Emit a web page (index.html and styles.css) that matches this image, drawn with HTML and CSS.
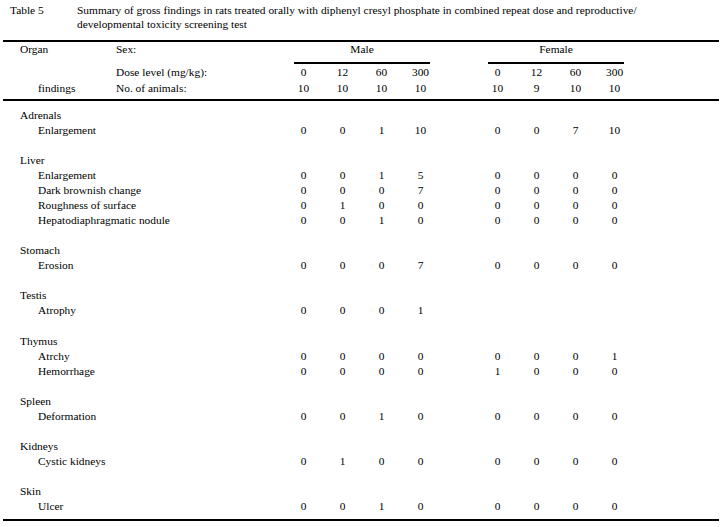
FILE: index.html
```html
<!DOCTYPE html>
<html>
<head>
<meta charset="utf-8">
<title>Table 5</title>
<link rel="stylesheet" href="styles.css">
</head>
<body>
<div class="page">
  <div class="caption">
    <div class="cap-label">Table 5</div>
    <div class="cap-text">Summary of gross findings in rats treated orally with diphenyl cresyl phosphate in combined repeat dose and reproductive/<br>developmental toxicity screening test</div>
  </div>
  <table class="tbl">
    <colgroup>
      <col class="c-organ"><col class="c-sex">
      <col class="c-num"><col class="c-num"><col class="c-num"><col class="c-num">
      <col class="c-gap">
      <col class="c-num"><col class="c-num"><col class="c-num"><col class="c-num">
      <col class="c-tail">
    </colgroup>
    <thead>
      <tr class="h1">
        <td class="organ-h">Organ</td>
        <td class="sex-h">Sex:</td>
        <td colspan="4"><div class="group">Male</div></td>
        <td></td>
        <td colspan="4"><div class="group">Female</div></td>
        <td></td>
      </tr>
      <tr class="h2">
        <td></td>
        <td class="sex-h">Dose level (mg/kg):</td>
        <td class="n">0</td><td class="n">12</td><td class="n">60</td><td class="n">300</td>
        <td></td>
        <td class="n">0</td><td class="n">12</td><td class="n">60</td><td class="n">300</td>
        <td></td>
      </tr>
      <tr class="h3">
        <td class="find-h">findings</td>
        <td class="sex-h">No. of animals:</td>
        <td class="n">10</td><td class="n">10</td><td class="n">10</td><td class="n">10</td>
        <td></td>
        <td class="n">10</td><td class="n">9</td><td class="n">10</td><td class="n">10</td>
        <td></td>
      </tr>
    </thead>
    <tbody>
      <tr class="first"><td colspan="12" class="organ">Adrenals</td></tr>
      <tr><td colspan="2" class="find">Enlargement</td><td class="n">0</td><td class="n">0</td><td class="n">1</td><td class="n">10</td><td></td><td class="n">0</td><td class="n">0</td><td class="n">7</td><td class="n">10</td><td></td></tr>
      <tr class="blank"><td colspan="12"></td></tr>

      <tr><td colspan="12" class="organ">Liver</td></tr>
      <tr><td colspan="2" class="find">Enlargement</td><td class="n">0</td><td class="n">0</td><td class="n">1</td><td class="n">5</td><td></td><td class="n">0</td><td class="n">0</td><td class="n">0</td><td class="n">0</td><td></td></tr>
      <tr><td colspan="2" class="find">Dark brownish change</td><td class="n">0</td><td class="n">0</td><td class="n">0</td><td class="n">7</td><td></td><td class="n">0</td><td class="n">0</td><td class="n">0</td><td class="n">0</td><td></td></tr>
      <tr><td colspan="2" class="find">Roughness of surface</td><td class="n">0</td><td class="n">1</td><td class="n">0</td><td class="n">0</td><td></td><td class="n">0</td><td class="n">0</td><td class="n">0</td><td class="n">0</td><td></td></tr>
      <tr><td colspan="2" class="find">Hepatodiaphragmatic nodule</td><td class="n">0</td><td class="n">0</td><td class="n">1</td><td class="n">0</td><td></td><td class="n">0</td><td class="n">0</td><td class="n">0</td><td class="n">0</td><td></td></tr>
      <tr class="blank"><td colspan="12"></td></tr>

      <tr><td colspan="12" class="organ">Stomach</td></tr>
      <tr><td colspan="2" class="find">Erosion</td><td class="n">0</td><td class="n">0</td><td class="n">0</td><td class="n">7</td><td></td><td class="n">0</td><td class="n">0</td><td class="n">0</td><td class="n">0</td><td></td></tr>
      <tr class="blank"><td colspan="12"></td></tr>

      <tr><td colspan="12" class="organ">Testis</td></tr>
      <tr><td colspan="2" class="find">Atrophy</td><td class="n">0</td><td class="n">0</td><td class="n">0</td><td class="n">1</td><td></td><td></td><td></td><td></td><td></td><td></td></tr>
      <tr class="blank tall"><td colspan="12"></td></tr>

      <tr><td colspan="12" class="organ">Thymus</td></tr>
      <tr><td colspan="2" class="find">Atrchy</td><td class="n">0</td><td class="n">0</td><td class="n">0</td><td class="n">0</td><td></td><td class="n">0</td><td class="n">0</td><td class="n">0</td><td class="n">1</td><td></td></tr>
      <tr><td colspan="2" class="find">Hemorrhage</td><td class="n">0</td><td class="n">0</td><td class="n">0</td><td class="n">0</td><td></td><td class="n">1</td><td class="n">0</td><td class="n">0</td><td class="n">0</td><td></td></tr>
      <tr class="blank"><td colspan="12"></td></tr>

      <tr><td colspan="12" class="organ">Spleen</td></tr>
      <tr><td colspan="2" class="find">Deformation</td><td class="n">0</td><td class="n">0</td><td class="n">1</td><td class="n">0</td><td></td><td class="n">0</td><td class="n">0</td><td class="n">0</td><td class="n">0</td><td></td></tr>
      <tr class="blank"><td colspan="12"></td></tr>

      <tr><td colspan="12" class="organ">Kidneys</td></tr>
      <tr><td colspan="2" class="find">Cystic kidneys</td><td class="n">0</td><td class="n">1</td><td class="n">0</td><td class="n">0</td><td></td><td class="n">0</td><td class="n">0</td><td class="n">0</td><td class="n">0</td><td></td></tr>
      <tr class="blank"><td colspan="12"></td></tr>

      <tr><td colspan="12" class="organ">Skin</td></tr>
      <tr class="last"><td colspan="2" class="find">Ulcer</td><td class="n">0</td><td class="n">0</td><td class="n">1</td><td class="n">0</td><td></td><td class="n">0</td><td class="n">0</td><td class="n">0</td><td class="n">0</td><td></td></tr>
    </tbody>
  </table>
</div>
</body>
</html>
```

FILE: styles.css
```css
html, body {
  margin: 0;
  padding: 0;
  background: #ffffff;
}

body {
  font-family: "Liberation Serif", "Times New Roman", serif;
  font-size: 11.4px;
  color: #000000;
}

.page {
  padding: 0 0 0 3px;
}

.caption {
  display: grid;
  grid-template-columns: 67px 1fr;
  padding: 3px 0 0 7px;
  line-height: 14px;
  height: 40px;
  box-sizing: border-box;
}

.tbl {
  border-collapse: separate;
  border-spacing: 0;
  table-layout: fixed;
  width: 716px;
  border-top: 2px solid #000;
  border-bottom: 2px solid #000;
}

.c-organ { width: 113px; }
.c-sex { width: 168px; }
.c-num { width: 39px; }
.c-gap { width: 38px; }
.c-tail { width: 85px; }

.tbl td {
  padding: 0;
  line-height: 15px;
  height: 15px;
  vertical-align: top;
  white-space: nowrap;
}

.h1 td {
  height: 22px;
}

.group {
  margin: 0 10px;
  height: 20px;
  border-bottom: 2px solid #000;
  text-align: center;
}

.h2 td,
.h3 td {
  height: 16px;
  line-height: 16px;
}

.h3 td {
  padding-bottom: 3px;
  border-bottom: 2px solid #000;
}

.organ-h { padding-left: 17px !important; }
.find-h { padding-left: 35px !important; }

.first td {
  padding-top: 7px;
}

.tall td {
  height: 16px;
}

.last td {
  padding-bottom: 5px;
}

.organ {
  padding-left: 17px !important;
}

.find {
  padding-left: 35px !important;
}

.n {
  text-align: center;
}
```
